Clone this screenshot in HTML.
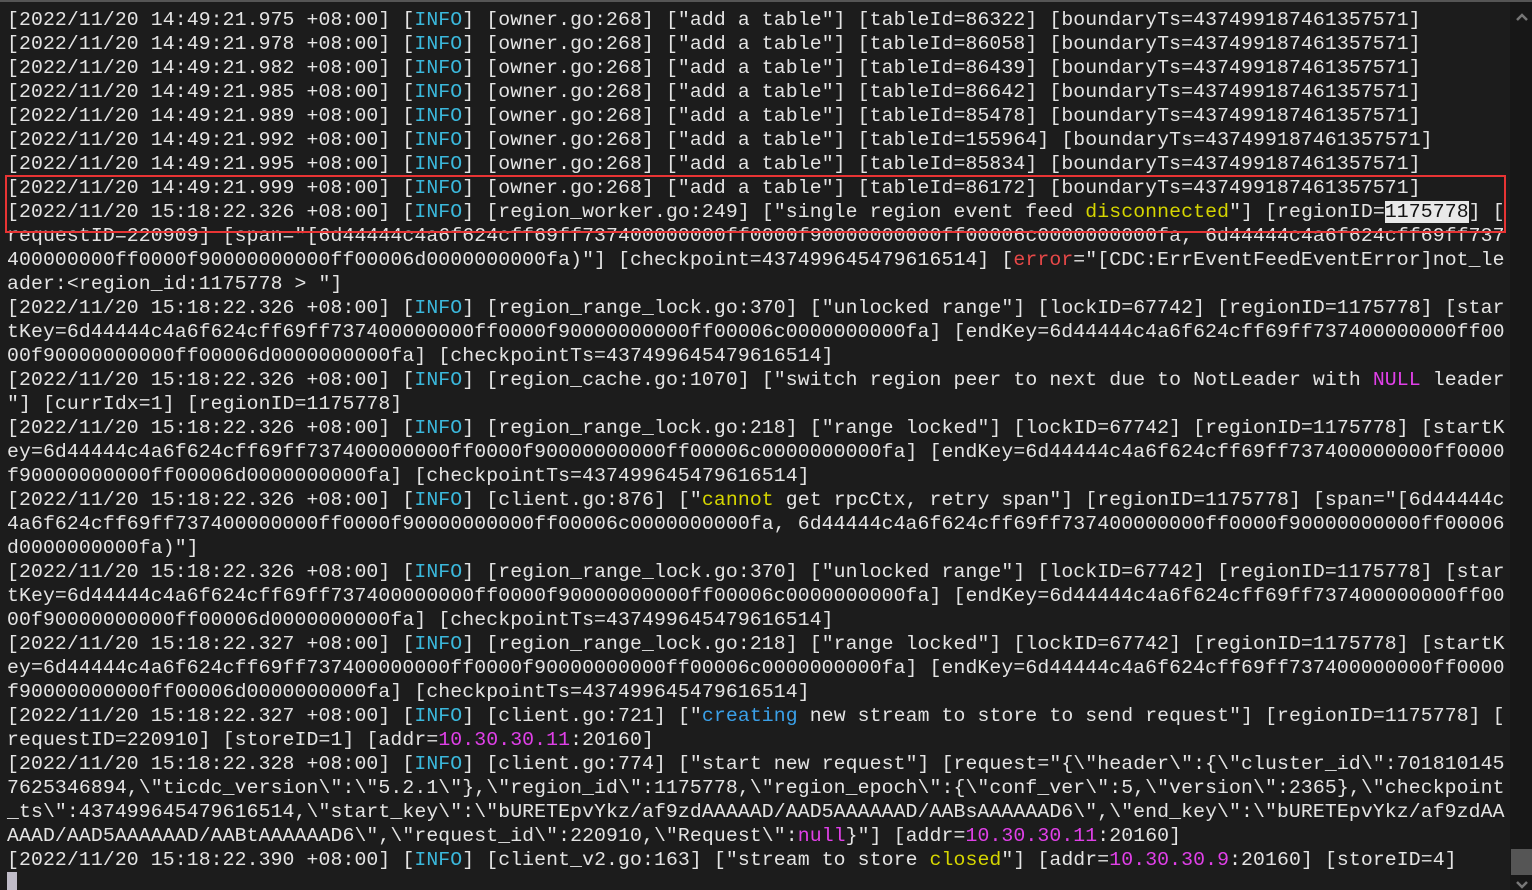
<!DOCTYPE html>
<html><head><meta charset="utf-8"><style>
html,body{margin:0;padding:0;background:#1c1c1c;width:1532px;height:890px;overflow:hidden;position:relative}
.t{position:absolute;left:7px;top:8px;font-family:"Liberation Mono",monospace;font-size:19.8px;line-height:24px;color:#e4e4e4;letter-spacing:0.11px}
.t div{height:24px;white-space:pre}
.c{color:#3bb8dc}.y{color:#d6d600}.m{color:#e040e8}.r{color:#e84848}.b{color:#3aa0e8}
.hl{background:#e8e8e8;color:#111}
.box{position:absolute;left:5px;top:175px;width:1497px;height:54px;border:2px solid #e83434}
.sb{position:absolute;left:1510px;top:0;width:22px;height:890px;background:#171717}
.topl{position:absolute;left:0;top:0;width:1532px;height:2px;background:#555}
.thumb{position:absolute;left:1511px;top:849px;width:21px;height:26px;background:#555}
.cur{position:absolute;left:7px;top:872px;width:10px;height:18px;background:#c0bcc8}
</style></head><body>
<div class="sb"></div><div class="topl"></div><div class="thumb"></div>
<svg style="position:absolute;left:1516px;top:12px" width="12" height="10"><path d="M1 8 L6 3 L11 8" stroke="#777" stroke-width="2.5" fill="none"/></svg>
<svg style="position:absolute;left:1516px;top:880px" width="12" height="10"><path d="M1 2 L6 7 L11 2" stroke="#777" stroke-width="2.5" fill="none"/></svg>
<div class="t"><div>[2022/11/20 14:49:21.975 +08:00] [<span class="c">INFO</span>] [owner.go:268] ["add a table"] [tableId=86322] [boundaryTs=437499187461357571]</div><div>[2022/11/20 14:49:21.978 +08:00] [<span class="c">INFO</span>] [owner.go:268] ["add a table"] [tableId=86058] [boundaryTs=437499187461357571]</div><div>[2022/11/20 14:49:21.982 +08:00] [<span class="c">INFO</span>] [owner.go:268] ["add a table"] [tableId=86439] [boundaryTs=437499187461357571]</div><div>[2022/11/20 14:49:21.985 +08:00] [<span class="c">INFO</span>] [owner.go:268] ["add a table"] [tableId=86642] [boundaryTs=437499187461357571]</div><div>[2022/11/20 14:49:21.989 +08:00] [<span class="c">INFO</span>] [owner.go:268] ["add a table"] [tableId=85478] [boundaryTs=437499187461357571]</div><div>[2022/11/20 14:49:21.992 +08:00] [<span class="c">INFO</span>] [owner.go:268] ["add a table"] [tableId=155964] [boundaryTs=437499187461357571]</div><div>[2022/11/20 14:49:21.995 +08:00] [<span class="c">INFO</span>] [owner.go:268] ["add a table"] [tableId=85834] [boundaryTs=437499187461357571]</div><div>[2022/11/20 14:49:21.999 +08:00] [<span class="c">INFO</span>] [owner.go:268] ["add a table"] [tableId=86172] [boundaryTs=437499187461357571]</div><div>[2022/11/20 15:18:22.326 +08:00] [<span class="c">INFO</span>] [region_worker.go:249] ["single region event feed <span class="y">disconnected</span>"] [regionID=<span class="hl">1175778</span>] [</div><div>requestID=220909] [span="[6d44444c4a6f624cff69ff737400000000ff0000f90000000000ff00006c0000000000fa, 6d44444c4a6f624cff69ff737</div><div>400000000ff0000f90000000000ff00006d0000000000fa)"] [checkpoint=437499645479616514] [<span class="r">error</span>="[CDC:ErrEventFeedEventError]not_le</div><div>ader:&lt;region_id:1175778 &gt; "]</div><div>[2022/11/20 15:18:22.326 +08:00] [<span class="c">INFO</span>] [region_range_lock.go:370] ["unlocked range"] [lockID=67742] [regionID=1175778] [star</div><div>tKey=6d44444c4a6f624cff69ff737400000000ff0000f90000000000ff00006c0000000000fa] [endKey=6d44444c4a6f624cff69ff737400000000ff00</div><div>00f90000000000ff00006d0000000000fa] [checkpointTs=437499645479616514]</div><div>[2022/11/20 15:18:22.326 +08:00] [<span class="c">INFO</span>] [region_cache.go:1070] ["switch region peer to next due to NotLeader with <span class="m">NULL</span> leader</div><div>"] [currIdx=1] [regionID=1175778]</div><div>[2022/11/20 15:18:22.326 +08:00] [<span class="c">INFO</span>] [region_range_lock.go:218] ["range locked"] [lockID=67742] [regionID=1175778] [startK</div><div>ey=6d44444c4a6f624cff69ff737400000000ff0000f90000000000ff00006c0000000000fa] [endKey=6d44444c4a6f624cff69ff737400000000ff0000</div><div>f90000000000ff00006d0000000000fa] [checkpointTs=437499645479616514]</div><div>[2022/11/20 15:18:22.326 +08:00] [<span class="c">INFO</span>] [client.go:876] ["<span class="y">cannot</span> get rpcCtx, retry span"] [regionID=1175778] [span="[6d44444c</div><div>4a6f624cff69ff737400000000ff0000f90000000000ff00006c0000000000fa, 6d44444c4a6f624cff69ff737400000000ff0000f90000000000ff00006</div><div>d0000000000fa)"]</div><div>[2022/11/20 15:18:22.326 +08:00] [<span class="c">INFO</span>] [region_range_lock.go:370] ["unlocked range"] [lockID=67742] [regionID=1175778] [star</div><div>tKey=6d44444c4a6f624cff69ff737400000000ff0000f90000000000ff00006c0000000000fa] [endKey=6d44444c4a6f624cff69ff737400000000ff00</div><div>00f90000000000ff00006d0000000000fa] [checkpointTs=437499645479616514]</div><div>[2022/11/20 15:18:22.327 +08:00] [<span class="c">INFO</span>] [region_range_lock.go:218] ["range locked"] [lockID=67742] [regionID=1175778] [startK</div><div>ey=6d44444c4a6f624cff69ff737400000000ff0000f90000000000ff00006c0000000000fa] [endKey=6d44444c4a6f624cff69ff737400000000ff0000</div><div>f90000000000ff00006d0000000000fa] [checkpointTs=437499645479616514]</div><div>[2022/11/20 15:18:22.327 +08:00] [<span class="c">INFO</span>] [client.go:721] ["<span class="b">creating</span> new stream to store to send request"] [regionID=1175778] [</div><div>requestID=220910] [storeID=1] [addr=<span class="m">10.30.30.11</span>:20160]</div><div>[2022/11/20 15:18:22.328 +08:00] [<span class="c">INFO</span>] [client.go:774] ["start new request"] [request="{\"header\":{\"cluster_id\":701810145</div><div>7625346894,\"ticdc_version\":\"5.2.1\"},\"region_id\":1175778,\"region_epoch\":{\"conf_ver\":5,\"version\":2365},\"checkpoint</div><div>_ts\":437499645479616514,\"start_key\":\"bURETEpvYkz/af9zdAAAAAD/AAD5AAAAAAD/AABsAAAAAAD6\",\"end_key\":\"bURETEpvYkz/af9zdAA</div><div>AAAD/AAD5AAAAAAD/AABtAAAAAAD6\",\"request_id\":220910,\"Request\":<span class="m">null</span>}"] [addr=<span class="m">10.30.30.11</span>:20160]</div><div>[2022/11/20 15:18:22.390 +08:00] [<span class="c">INFO</span>] [client_v2.go:163] ["stream to store <span class="y">closed</span>"] [addr=<span class="m">10.30.30.9</span>:20160] [storeID=4]</div></div>
<div class="box"></div>
<div class="cur"></div>
</body></html>
